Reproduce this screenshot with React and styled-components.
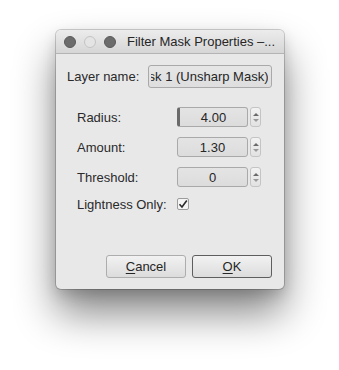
import React, { useEffect, useRef } from "react";
import styled, { createGlobalStyle } from "styled-components";

const Global = createGlobalStyle`
  html, body { margin: 0; padding: 0; background: #ffffff; }
  body { font-family: "Liberation Sans", Arial, sans-serif; }
`;

const Page = styled.div`
  width: 339px;
  height: 370px;
  padding: 30px 0 0 56px;
  box-sizing: border-box;
  overflow: hidden;
`;

const Window = styled.div`
  width: 228px;
  height: 259px;
  border-radius: 5px;
  background: #e8e8e8;
  box-shadow: 0 0 0 1px rgba(0,0,0,0.18), 0 24px 42px rgba(0,0,0,0.48), 0 6px 14px rgba(0,0,0,0.15);
  display: flex;
  flex-direction: column;
  overflow: hidden;
  font-size: 13px;
  color: #262626;
`;

const TitleBar = styled.div`
  height: 23px;
  flex: none;
  display: flex;
  align-items: center;
  padding-left: 8px;
  background: linear-gradient(#ececec, #d6d6d6);
  border-bottom: 1px solid #b4b4b4;
  gap: 8px;
`;

const Light = styled.span`
  width: 12px;
  height: 12px;
  border-radius: 50%;
  box-sizing: border-box;
  background: ${(p) => (p.$off ? "#e4e4e4" : "#6c6c6c")};
  border: 1px solid ${(p) => (p.$off ? "#c4c4c4" : "#5a5a5a")};
`;

const Title = styled.span`
  margin-left: 3px;
  font-size: 13px;
  color: #262626;
  white-space: nowrap;
`;

const Body = styled.div`
  flex: 1;
  display: flex;
  flex-direction: column;
  padding: 11px 12px 11px 11px;
`;

const NameRow = styled.div`
  display: flex;
  align-items: center;
  height: 23px;
  gap: 6px;
`;

const Label = styled.span`
  white-space: nowrap;
  color: #2a2a2a;
`;

const NameField = styled.input`
  flex: none;
  width: 124px;
  height: 23px;
  box-sizing: border-box;
  margin: 0 0 0 auto;
  border: 1px solid #a9a9a9;
  border-radius: 3px;
  background: linear-gradient(#e6e6e6, #dedede);
  font-family: "Liberation Sans", Arial, sans-serif;
  font-size: 13px;
  color: #262626;
  padding: 0 3px 0 2px;
  outline: none;
`;

const Form = styled.div`
  margin-top: 19px;
  padding-left: 10px;
  display: flex;
  flex-direction: column;
  gap: 10px;
`;

const FormRow = styled.div`
  display: flex;
  align-items: center;
  height: ${(p) => (p.$short ? "14px" : "20px")};
`;

const FormLabel = styled(Label)`
  width: 100px;
  flex: none;
`;

const SpinBox = styled.div`
  display: flex;
  align-items: stretch;
  gap: 2px;
  height: 20px;
`;

const SpinField = styled.div`
  width: 71px;
  box-sizing: border-box;
  border: 1px solid #a9a9a9;
  border-left: ${(p) => (p.$focus ? "3px solid #6a6a6a" : "1px solid #a9a9a9")};
  border-radius: 3px;
  background: linear-gradient(#e4e4e4, #dcdcdc);
  display: flex;
  align-items: center;
  justify-content: center;
  font-size: 13px;
  color: #262626;
`;

const Spinner = styled.div`
  width: 11px;
  box-sizing: border-box;
  border: 1px solid #c4c4c4;
  border-radius: 3px;
  background: linear-gradient(#f2f2f2, #e2e2e2);
  display: flex;
  flex-direction: column;
  align-items: center;
  justify-content: center;
  gap: 3px;
`;

const Arrow = styled.span`
  width: 0;
  height: 0;
  border-left: 3px solid transparent;
  border-right: 3px solid transparent;
  ${(p) =>
    p.$down
      ? "border-top: 3px solid #9a9a9a;"
      : "border-bottom: 3px solid #6a6a6a;"}
`;

const Check = styled.div`
  width: 12px;
  height: 12px;
  box-sizing: border-box;
  border: 1px solid #9c9c9c;
  border-radius: 2px;
  background: #f4f4f4;
  display: flex;
  align-items: center;
  justify-content: center;
`;

const Buttons = styled.div`
  margin-top: auto;
  display: flex;
  justify-content: flex-end;
  gap: 6px;
`;

const Button = styled.button`
  width: 80px;
  height: 23px;
  box-sizing: border-box;
  border: 1px solid ${(p) => (p.$default ? "#5e5e5e" : "#adadad")};
  border-radius: 3px;
  background: linear-gradient(#f2f2f2, #dcdcdc);
  font-family: "Liberation Sans", Arial, sans-serif;
  font-size: 13px;
  color: #262626;
  padding: 0;
  u { text-decoration: underline; text-underline-offset: 2px; }
`;

function Spin({ value, focus }) {
  return (
    <SpinBox>
      <SpinField $focus={focus}>{value}</SpinField>
      <Spinner>
        <Arrow />
        <Arrow $down />
      </Spinner>
    </SpinBox>
  );
}

export default function App() {
  const nameRef = useRef(null);
  useEffect(() => {
    const el = nameRef.current;
    if (el) el.scrollLeft = el.scrollWidth;
  }, []);
  return (
    <Page>
      <Global />
      <Window>
        <TitleBar>
          <Light />
          <Light $off />
          <Light />
          <Title>Filter Mask Properties –...</Title>
        </TitleBar>
        <Body>
          <NameRow>
            <Label>Layer name:</Label>
            <NameField ref={nameRef} readOnly value="Filter Mask 1 (Unsharp Mask)" />
          </NameRow>
          <Form>
            <FormRow>
              <FormLabel>Radius:</FormLabel>
              <Spin value="4.00" focus />
            </FormRow>
            <FormRow>
              <FormLabel>Amount:</FormLabel>
              <Spin value="1.30" />
            </FormRow>
            <FormRow>
              <FormLabel>Threshold:</FormLabel>
              <Spin value="0" />
            </FormRow>
            <FormRow $short>
              <FormLabel>Lightness Only:</FormLabel>
              <Check>
                <svg width="10" height="10" viewBox="0 0 10 10">
                  <path d="M1.5 5.2 L4 8 L8.8 1.5" fill="none" stroke="#2a2a2a" strokeWidth="1.6" />
                </svg>
              </Check>
            </FormRow>
          </Form>
          <Buttons>
            <Button><u>C</u>ancel</Button>
            <Button $default><u>O</u>K</Button>
          </Buttons>
        </Body>
      </Window>
    </Page>
  );
}
